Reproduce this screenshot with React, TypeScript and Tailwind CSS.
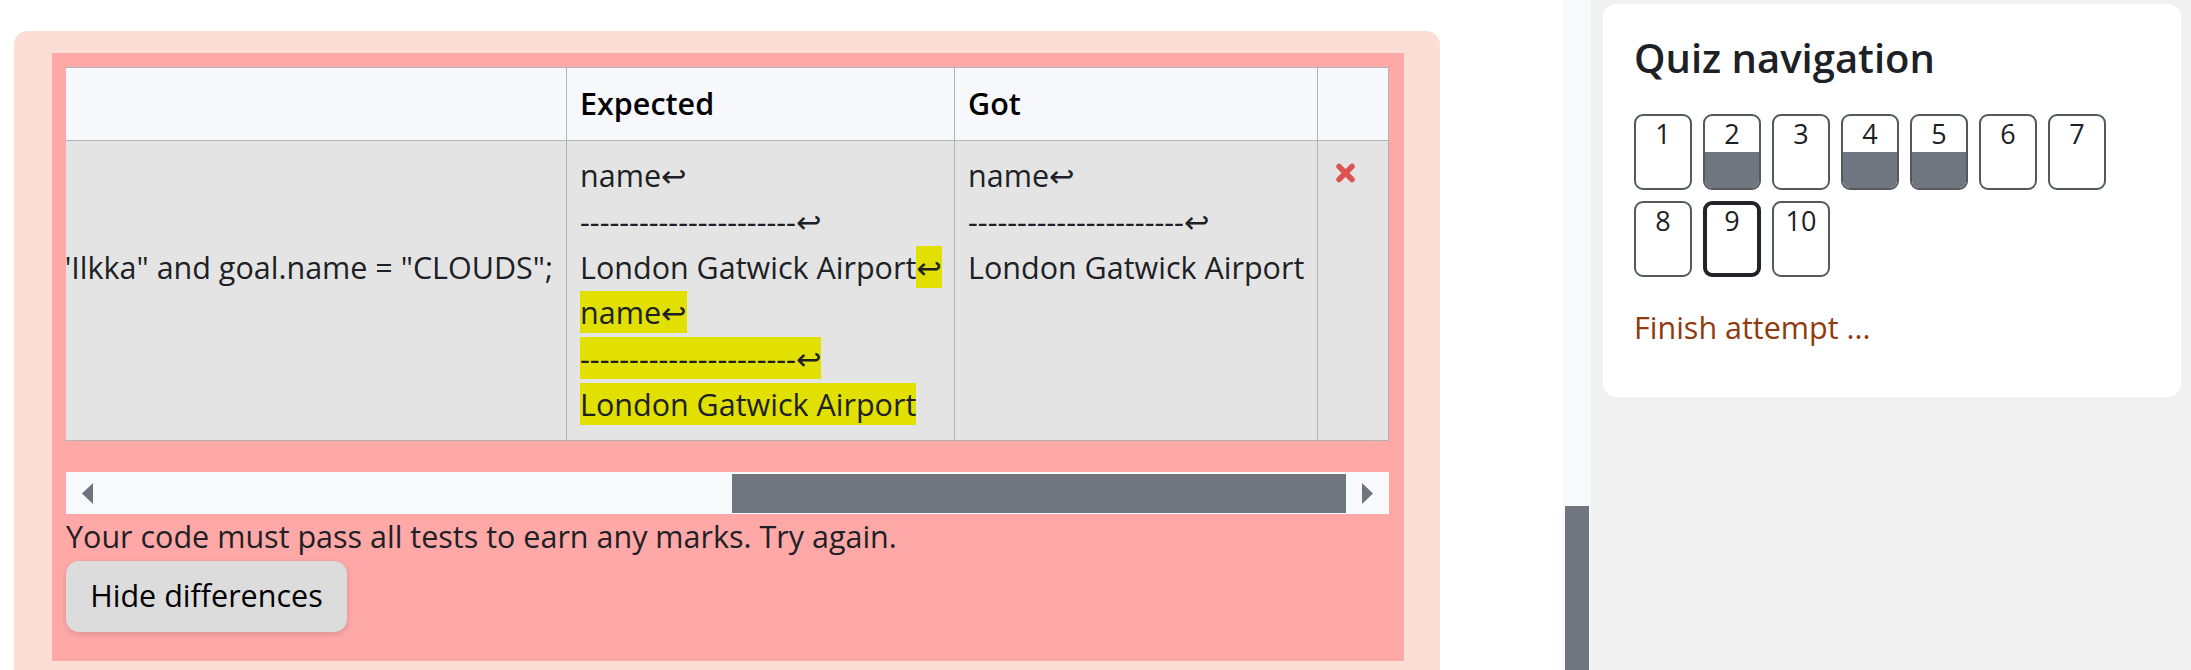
import React from "react";

const RET = "\u21A9";
const DASH = "-".repeat(22);

function Hl({ children }: { children: React.ReactNode }) {
  return <span className="bg-[#e1e000]">{children}</span>;
}

function QButton({ n, filled, current }: { n: number; filled?: boolean; current?: boolean }) {
  return (
    <div
      className={
        current
          ? "flex h-[76px] w-[58px] flex-col overflow-hidden rounded-[9px] border-[4px] border-[#212529] bg-white"
          : "flex h-[76px] w-[58px] flex-col overflow-hidden rounded-[9px] border-2 border-[#55595d] bg-white"
      }
    >
      <div className={current ? "flex-1 pt-[2px] text-center text-[27px] leading-[27px]" : "flex-1 pt-[4px] text-center text-[27px] leading-[27px]"}>
        {n}
      </div>
      {filled ? <div className="h-[36px] bg-[#6f7680]" /> : null}
    </div>
  );
}

function Arrow({ dir }: { dir: "left" | "right" }) {
  return (
    <svg width="11" height="21" viewBox="0 0 11 21">
      {dir === "left" ? (
        <polygon points="11,0 0,10.5 11,21" fill="#6c757d" />
      ) : (
        <polygon points="0,0 11,10.5 0,21" fill="#6c757d" />
      )}
    </svg>
  );
}

export default function App() {
  return (
    <div className="flex h-[670px] w-[2191px] overflow-hidden bg-white font-['Open_Sans','DejaVu_Sans',sans-serif] text-[#1d2125]">
      <main className="w-[1563px] shrink-0 pl-[14px] pt-[31px]">
        <div className="w-[1426px] rounded-t-[14px] bg-[#fcded4] pb-[20px] pl-[38px] pr-[36px] pt-[22px]">
          <div className="w-[1352px] bg-[#ffa8a8] pb-[29px] pl-[14px] pr-[15px] pt-[14px]">
            {/* results table (scrolled horizontally) */}
            <div className="flex w-[1323px] flex-col overflow-hidden border-y border-r border-[#b3b3b3] text-[30.5px] leading-[45.75px]">
              <div className="flex h-[73px] border-b border-[#b3b3b3] bg-[#f7f8fc] font-semibold text-black">
                <div className="w-[501px] shrink-0 border-r border-[#b3b3b3]" />
                <div className="flex w-[388px] shrink-0 items-center border-r border-[#b3b3b3] pl-[13px]">Expected</div>
                <div className="flex w-[363px] shrink-0 items-center border-r border-[#b3b3b3] pl-[13px]">Got</div>
                <div className="w-[70px] shrink-0" />
              </div>
              <div className="flex h-[299px] bg-[#e4e4e4]">
                <div className="flex w-[501px] shrink-0 justify-end overflow-hidden border-r border-[#b3b3b3] pr-[13px] pt-[12px]">
                  <div className="shrink-0 whitespace-pre">
                    {"SELECT airport.name\nFROM game p, goal, airport\nWHERE airport.ident = p.location and p.name = \"Ilkka\" and goal.name = \"CLOUDS\";"}
                  </div>
                </div>
                <div className="w-[388px] shrink-0 whitespace-pre border-r border-[#b3b3b3] pl-[13px] pt-[12px]">
                  {"name" + RET}
                  <br />
                  {DASH + RET}
                  <br />
                  {"London Gatwick Airport"}
                  <Hl>{RET}</Hl>
                  <br />
                  <Hl>{"name" + RET}</Hl>
                  <br />
                  <Hl>{DASH + RET}</Hl>
                  <br />
                  <Hl>London Gatwick Airport</Hl>
                </div>
                <div className="w-[363px] shrink-0 whitespace-pre border-r border-[#b3b3b3] pl-[13px] pt-[12px]">
                  {"name" + RET}
                  <br />
                  {DASH + RET}
                  <br />
                  {"London Gatwick Airport"}
                </div>
                <div className="w-[70px] shrink-0 pl-[17px] pt-[22px]">
                  <svg width="21" height="20" viewBox="0 0 21 20">
                    <path d="M4 3.5 L17 16.5 M17 3.5 L4 16.5" stroke="#dc5450" strokeWidth="5.5" strokeLinecap="round" fill="none" />
                  </svg>
                </div>
              </div>
            </div>

            {/* horizontal scrollbar */}
            <div className="mt-[31px] flex h-[42px] w-[1323px] bg-[#f8f9fa]">
              <div className="flex w-[666px] shrink-0 items-center pl-[16px]">
                <Arrow dir="left" />
              </div>
              <div className="mt-[2px] h-[39px] w-[614px] shrink-0 bg-[#6f7680]" />
              <div className="flex flex-1 items-center pl-[16px]">
                <Arrow dir="right" />
              </div>
            </div>

            <p className="text-[30.5px] leading-[45.75px]">Your code must pass all tests to earn any marks. Try again.</p>
            <button className="mt-[1px] flex h-[71px] w-[281px] items-center justify-center rounded-[13px] bg-[#dcdcdc] text-[30.5px] font-medium text-black shadow-[0_2px_6px_rgba(0,0,0,0.15)]">
              Hide differences
            </button>
          </div>
        </div>
      </main>

      {/* vertical scrollbar */}
      <div className="flex w-[28px] shrink-0 flex-col bg-[#f8f9fa]">
        <div className="h-[506px] shrink-0" />
        <div className="mx-[2px] flex-1 bg-[#6f7680]" />
      </div>

      <aside className="flex-1 bg-[#f1f1f1] pl-[12px] pr-[10px] pt-[4px]">
        <div className="h-[393px] rounded-[14px] bg-white pl-[31px] pt-[31px]">
          <h2 className="text-[40px] font-semibold leading-[45px]">Quiz navigation</h2>
          <div className="mt-[34px] grid grid-cols-[repeat(7,58px)] gap-[11px]">
            <QButton n={1} />
            <QButton n={2} filled />
            <QButton n={3} />
            <QButton n={4} filled />
            <QButton n={5} filled />
            <QButton n={6} />
            <QButton n={7} />
            <QButton n={8} />
            <QButton n={9} current />
            <QButton n={10} />
          </div>
          <a className="mt-[28px] block text-[30.5px] leading-[45.75px] text-[#8f3b0e]">Finish attempt ...</a>
        </div>
      </aside>
    </div>
  );
}
